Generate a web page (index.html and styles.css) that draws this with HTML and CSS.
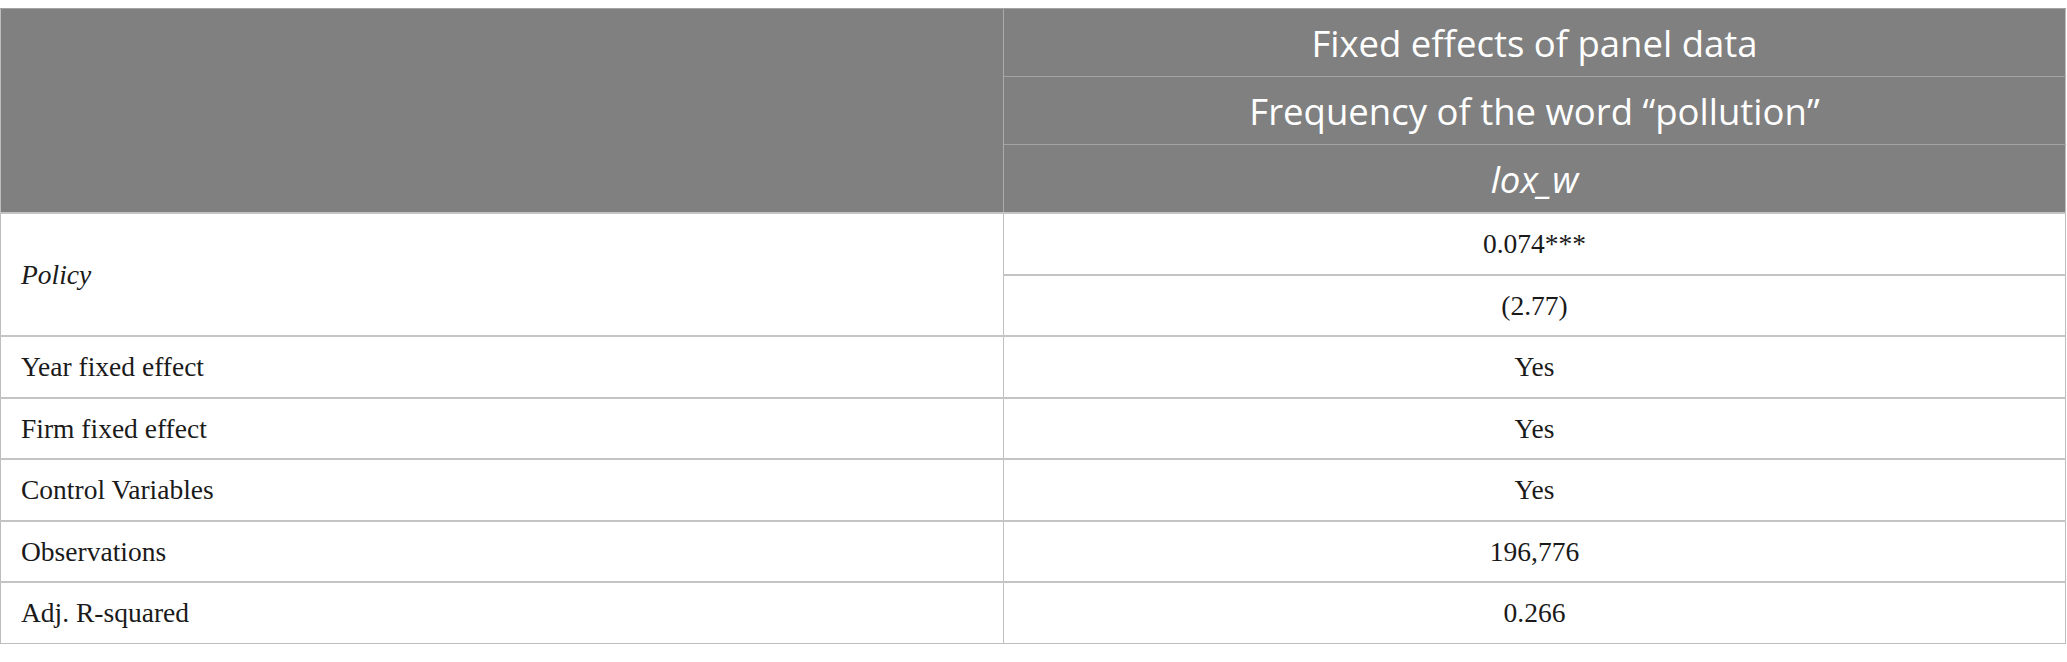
FILE: index.html
```html
<!DOCTYPE html>
<html lang="en">
<head>
<meta charset="utf-8">
<title>Fixed effects table</title>
<link rel="stylesheet" href="styles.css">
</head>
<body>
<table class="results">
  <colgroup>
    <col class="col-label">
    <col class="col-value">
  </colgroup>
  <thead>
    <tr>
      <th class="corner" rowspan="3"></th>
      <th class="head">Fixed effects of panel data</th>
    </tr>
    <tr>
      <th class="head">Frequency of the word “pollution”</th>
    </tr>
    <tr>
      <th class="head"><em>lox_w</em></th>
    </tr>
  </thead>
  <tbody>
    <tr>
      <td class="label" rowspan="2"><em>Policy</em></td>
      <td class="value">0.074***</td>
    </tr>
    <tr>
      <td class="value">(2.77)</td>
    </tr>
    <tr>
      <td class="label">Year fixed effect</td>
      <td class="value">Yes</td>
    </tr>
    <tr>
      <td class="label">Firm fixed effect</td>
      <td class="value">Yes</td>
    </tr>
    <tr>
      <td class="label">Control Variables</td>
      <td class="value">Yes</td>
    </tr>
    <tr>
      <td class="label">Observations</td>
      <td class="value">196,776</td>
    </tr>
    <tr>
      <td class="label">Adj. R-squared</td>
      <td class="value">0.266</td>
    </tr>
  </tbody>
</table>
</body>
</html>
```

FILE: styles.css
```css
html, body {
  margin: 0;
  padding: 0;
  background: #ffffff;
}

body {
  padding-top: 8px;
}

.results {
  width: 2066px;
  border-collapse: collapse;
  table-layout: fixed;
  border: 1px solid #bdbdbd;
}

.col-label {
  width: 1003px;
}

.results th {
  background: #7f807f;
  color: #ffffff;
  font-family: "Open Sans", "Liberation Sans", sans-serif;
  font-weight: 400;
  font-size: 36.5px;
  line-height: 44px;
  padding: 11.5px 20px;
  text-align: center;
  border-top: 1px solid #a2a3a2;
  border-left: 1px solid #a9aaa9;
}

.results th.corner {
  border-left: none;
}

.results th em {
  font-style: italic;
}

.results td {
  font-family: "Liberation Serif", "Times New Roman", serif;
  font-size: 27.5px;
  line-height: 34px;
  color: #1a1a1a;
  padding: 13px 20px 12.5px;
  border-top: 2px solid #c4c4c4;
  border-left: 1px solid #c0c0c0;
  vertical-align: middle;
}

.results td.label {
  text-align: left;
  border-left: none;
}

.results td.value {
  text-align: center;
}
```
